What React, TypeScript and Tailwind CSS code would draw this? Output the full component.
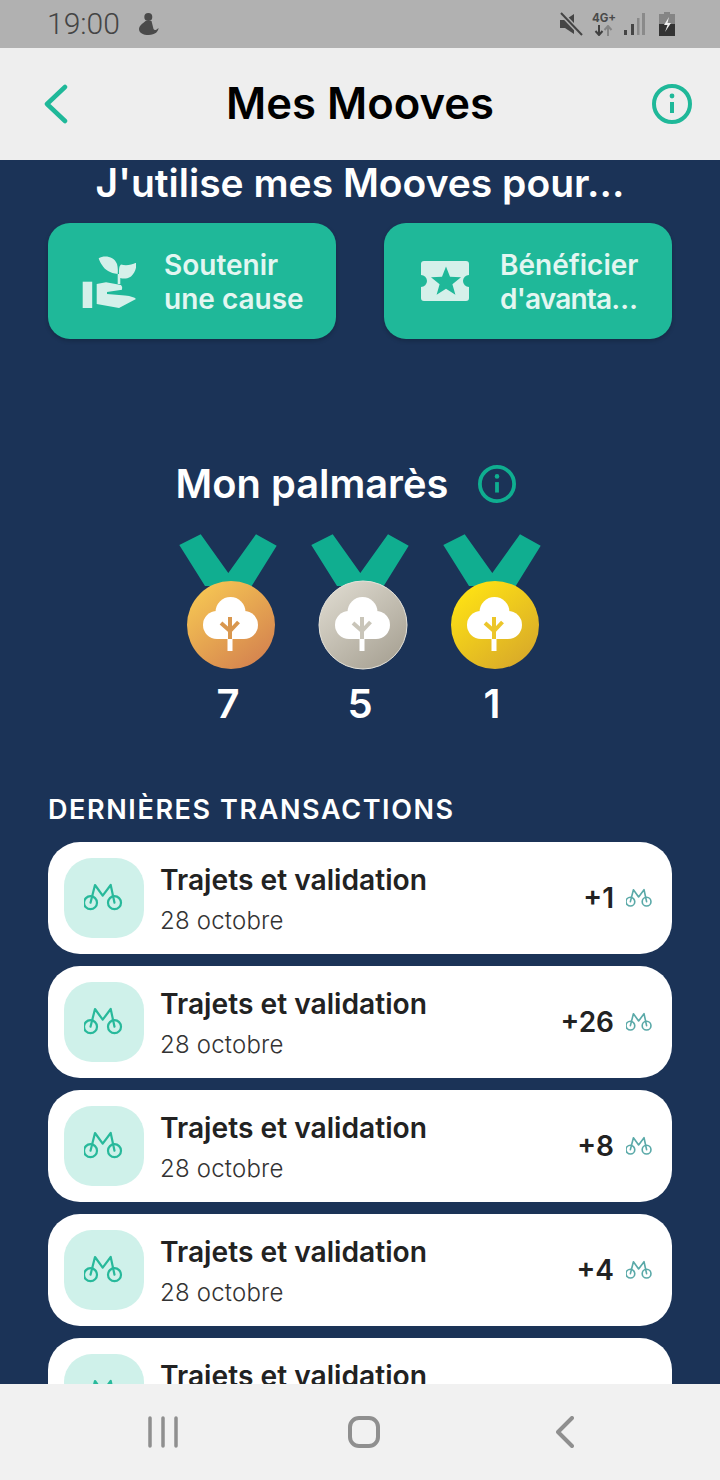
const medals = [
  { id: 'bronze', count: 7, from: '#f6c653', to: '#d4824f', trunk: '#d9974e', edge: 'none' },
  { id: 'silver', count: 5, from: '#dcd8cd', to: '#a8a294', trunk: '#c9c5b9', edge: '#e6e3da' },
  { id: 'gold', count: 1, from: '#ffe313', to: '#d8a92a', trunk: '#ecc62a', edge: 'none' },
];

const amounts = [1, 26, 8, 4];

function Bike({ size, color, width }: { size: number; color: string; width: number }) {
  return (
    <svg width={size} height={size} viewBox="0 0 40 40" fill="none" stroke={color} strokeWidth={width} strokeLinejoin="round" strokeLinecap="round" className="shrink-0">
      <circle cx="6.5" cy="24.7" r="6.5" />
      <circle cx="30.5" cy="24.7" r="6.5" />
      <path d="M6.5 24.7 11 7l7.7 10.7L26.700 7l3.800 17.700" />
    </svg>
  );
}

function InfoIcon({ color, size }: { color: string; size: number }) {
  return (
    <svg width={size} height={size} viewBox="0 0 40 40" fill="none" stroke={color} className="shrink-0">
      <circle cx="20" cy="20" r="18" strokeWidth="4" />
      <path d="M20 18v11" strokeWidth="4" />
      <circle cx="20" cy="12" r="2.4" fill={color} stroke="none" />
    </svg>
  );
}

function Medal({ id, from, to, trunk, edge }: { id: string; from: string; to: string; trunk: string; edge: string }) {
  return (
    <svg width="132" height="144" viewBox="0 0 132 144">
      <defs>
        <linearGradient id={id} x1="0.15" y1="0.05" x2="0.85" y2="0.95">
          <stop offset="0" stopColor={from} />
          <stop offset="1" stopColor={to} />
        </linearGradient>
      </defs>
      <path d="M17.300 15 38.700 4.300 66.300 43 94 4.300l20.700 11.400L89.700 56H43z" fill="#10ae90" />
      <circle cx="69" cy="95" r="44" fill={`url(#${id})`} stroke={edge} strokeWidth="1" />
      <g fill="#fff">
        <circle cx="68.500" cy="82" r="15" />
        <circle cx="55" cy="95" r="14" />
        <circle cx="82" cy="95" r="14" />
        <rect x="55" y="90" width="27" height="19" />
        <rect x="65.500" y="105" width="5" height="16" />
      </g>
      <path d="M68 87v22M59 93l9 8 8.500-9" fill="none" stroke={trunk} strokeWidth="4" />
    </svg>
  );
}

function CauseIcon() {
  return (
    <svg width="56" height="56" viewBox="0 0 56 56" fill="#d5f0ea" className="shrink-0">
      <rect x="2.700" y="28.700" width="9.500" height="26.300" />
      <path d="M16.700 31 26 29.300 41 32Q43 34 42 36.700L27 39V41L45 42.500Q54 43.500 56 46L39 55 16.700 51z" />
      <path d="M18.700 5.300C24 2 34 3 37 11 38 15 38 18 37.700 21 30 20 25 17 22 12 20 9 19 7 18.700 5.300z" />
      <path d="M39 21C39 16 39 13 41 11.500 46 13 52 12 56.700 9.300 56.500 15 55 20 51 23.500 47 26 43 26 40.300 25V31H37.700V21z" />
    </svg>
  );
}

function TicketIcon() {
  return (
    <svg width="56" height="56" viewBox="0 0 56 56" className="shrink-0">
      <path
        fill="#d5f0ea"
        fillRule="evenodd"
        d="M8 8h42a3 3 0 0 1 3 3v11a6 6 0 0 0 0 12v11a3 3 0 0 1-3 3H8a3 3 0 0 1-3-3V34a6 6 0 0 0 0-12V11a3 3 0 0 1 3-3zM30 13.500l-4 10.300-11 .5 8.600 6.900-3 10.600 9.400-6 9.400 6-3-10.600 8.600-6.900-11-.5z"
      />
    </svg>
  );
}

function StatusIcons() {
  return (
    <div className="flex items-center">
      <svg width="24" height="24" viewBox="0 0 24 24" className="shrink-0">
        <path d="M1 8h5l9-6v20l-9-6H1z" fill="#454545" />
        <path d="M2 1l21 22" stroke="#b1b1b1" strokeWidth="5" />
        <path d="M2 1l21 22" stroke="#454545" strokeWidth="2" />
      </svg>
      <div className="ml-[9px] flex w-[24px] flex-col items-center">
        <span className="text-[11.500px] leading-[12px] font-bold text-[#4a4a4a]">4G+</span>
        <svg width="20" height="11" viewBox="0 0 20 11" className="mt-[1px]">
          <path d="M5 0v9M1.500 6 5 10l3.500-4" fill="none" stroke="#404040" strokeWidth="2" />
          <path d="M14 11V2M10.500 5 14 1l3.500 4" fill="none" stroke="#858585" strokeWidth="2" />
        </svg>
      </div>
      <svg width="22" height="24" viewBox="0 0 22 24" className="ml-[8px] shrink-0">
        <rect x="0" y="18" width="3" height="5" fill="#454545" />
        <rect x="7" y="12" width="3" height="11" fill="#454545" />
        <rect x="13" y="6" width="2.500" height="17" fill="#8a8a8a" />
        <rect x="18" y="1" width="3" height="22" fill="#8a8a8a" />
      </svg>
      <svg width="16" height="24" viewBox="0 0 16 24" className="ml-[13px] shrink-0">
        <path d="M5 0h6v2h5v10H0V2h5z" fill="#858585" />
        <rect x="0" y="12" width="16" height="12" fill="#333" />
        <path d="M10 5 5 13h3.500L6 20l6-9H8.500z" fill="#eee" />
      </svg>
    </div>
  );
}

export default function App() {
  return (
    <div className="flex h-[1480px] w-[720px] flex-col overflow-hidden bg-[#1b3357] font-['Inter',sans-serif]">
      <div className="flex h-[48px] shrink-0 items-center justify-between bg-[#b1b1b1] pr-[45px] pl-[47px]">
        <div className="flex items-center">
          <span className="font-['Roboto',sans-serif] text-[30px] leading-none font-light text-[#444444]">19:00</span>
          <svg width="22" height="24" viewBox="0 0 22 24" className="ml-[17px]">
            <circle cx="11.300" cy="5" r="4" fill="#4a4a4a" />
            <path d="M8 9h6.500l2 8c1 2 3 1 5-1 0 3-3 7-10 7-5 0-9.500-2-9.500-6 0-3 3.500-5.500 6.500-8z" fill="#4a4a4a" />
          </svg>
        </div>
        <StatusIcons />
      </div>

      <header className="flex h-[112px] shrink-0 items-center justify-between bg-[#eeeeee] pr-[28px] pl-[44px]">
        <svg width="24" height="40" viewBox="0 0 24 40" fill="none" stroke="#1fb899" strokeWidth="4.500" strokeLinecap="round" strokeLinejoin="round">
          <path d="M21 3 3 20l18 17" />
        </svg>
        <h1 className="mb-[1px] text-[43.600px] leading-none font-semibold text-black">Mes Mooves</h1>
        <InfoIcon color="#1fb899" size={40} />
      </header>

      <main className="min-h-0 flex-1 overflow-hidden px-[48px]">
        <h2 className="text-center text-[39px] leading-[46px] font-semibold text-white">J'utilise mes Mooves pour...</h2>

        <div className="mt-[17px] grid grid-cols-2 gap-[48px]">
          <div className="flex h-[116px] items-center gap-[28px] rounded-[22px] bg-[#1fb899] pl-[32px] shadow-[0_2px_4px_rgba(0,0,0,0.2)]">
            <CauseIcon />
            <p className="pt-[2px] text-[28px] leading-[34px] font-semibold text-[#e3f6f1]">
              Soutenir
              <br />
              une cause
            </p>
          </div>
          <div className="flex h-[116px] items-center gap-[28px] rounded-[22px] bg-[#1fb899] pl-[32px] shadow-[0_2px_4px_rgba(0,0,0,0.2)]">
            <TicketIcon />
            <p className="pt-[2px] text-[28px] leading-[34px] font-semibold text-[#e3f6f1]">
              Bénéficier
              <br />
              <span className="tracking-[-0.800px]">d'avanta…</span>
            </p>
          </div>
        </div>

        <div className="mt-[122px] flex items-center justify-center gap-[30px] pr-[28px]">
          <h2 className="text-[39.800px] leading-[46px] font-semibold text-white">Mon palmarès</h2>
          <InfoIcon color="#0fae90" size={38} />
        </div>

        <div className="mt-[23px] flex justify-center">
          {medals.map((m) => (
            <div key={m.id} className="flex w-[132px] flex-col items-center">
              <Medal id={m.id} from={m.from} to={m.to} trunk={m.trunk} edge={m.edge} />
              <span className="mt-[6px] text-[40px] leading-[48px] font-semibold text-white">{m.count}</span>
            </div>
          ))}
        </div>

        <h3 className="mt-[66px] text-[27px] leading-[32px] font-semibold tracking-[1.600px] text-white uppercase">Dernières transactions</h3>

        <div className="mt-[16px] flex flex-col gap-[12px]">
          {[...amounts, null].map((a, i) => (
            <div key={i} className="flex h-[112px] shrink-0 items-center rounded-[32px] bg-white pr-[19px] pl-[16px]">
              <div className="flex size-[80px] shrink-0 items-center justify-center rounded-[28px] bg-[#cff1ea]">
                <Bike size={40} color="#28b99b" width={2.200} />
              </div>
              <div className="ml-[16px] min-w-0 flex-1 pt-[1px]">
                <p className="text-[28.200px] leading-[36px] font-semibold text-[#222222]">Trajets et validation</p>
                <p className="mt-[8px] text-[24px] leading-[30px] font-light tracking-[0.2px] text-[#333333]">28 octobre</p>
              </div>
              {a !== null && (
                <div className="flex items-center gap-[12px]">
                  <span className="text-[28px] leading-none font-semibold text-[#222222]">+{a}</span>
                  <Bike size={27} color="#5aa9a8" width={2.400} />
                </div>
              )}
            </div>
          ))}
        </div>
      </main>

      <nav className="flex h-[96px] shrink-0 items-center justify-center bg-[#f1f1f1] pl-[8px]">
        <div className="flex w-[201px] justify-center">
          <svg width="30" height="32" viewBox="0 0 30 32" fill="none" stroke="#8f8f8f" strokeWidth="3.500" strokeLinecap="round">
            <path d="M2 2v28M15 2v28M28 2v28" />
          </svg>
        </div>
        <div className="flex w-[201px] justify-center">
          <svg width="32" height="32" viewBox="0 0 32 32" fill="none" stroke="#8f8f8f" strokeWidth="4">
            <rect x="2" y="2" width="28" height="28" rx="9" />
          </svg>
        </div>
        <div className="flex w-[201px] justify-center">
          <svg width="18" height="32" viewBox="0 0 18 32" fill="none" stroke="#8f8f8f" strokeWidth="4" strokeLinecap="round" strokeLinejoin="round">
            <path d="M16 2 2 16l14 14" />
          </svg>
        </div>
      </nav>
    </div>
  );
}
